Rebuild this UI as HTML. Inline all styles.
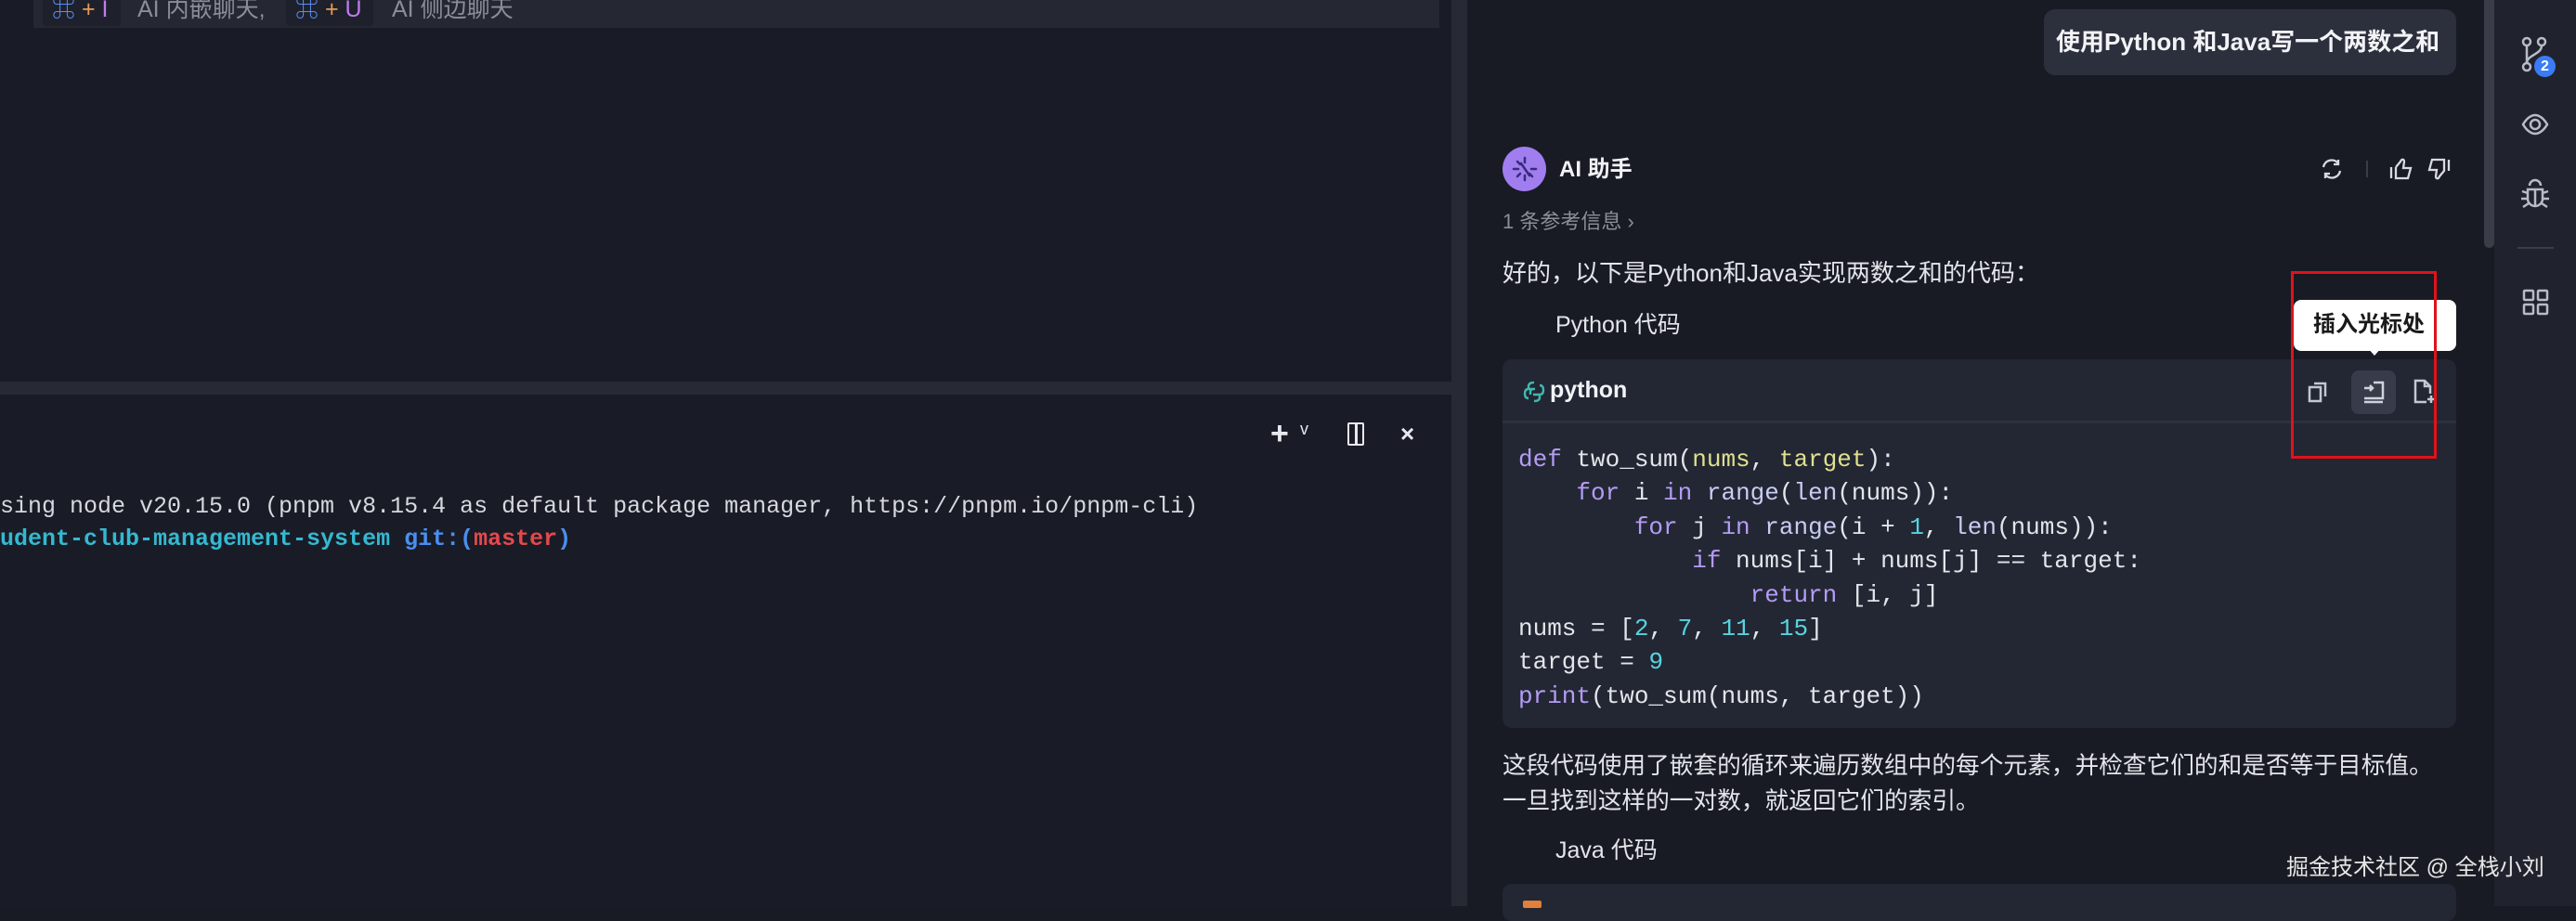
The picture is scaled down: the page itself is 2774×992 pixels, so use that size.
<!DOCTYPE html>
<html><head><meta charset="utf-8"><style>
*{margin:0;padding:0;box-sizing:border-box}
body{width:2774px;height:976px;background:#181b24;position:relative;overflow:hidden;font-family:"Liberation Sans","Noto Sans CJK SC",sans-serif;color:#e3e5ea}
.a{position:absolute;white-space:nowrap}
.mono{font-family:"Liberation Mono","DejaVu Sans Mono",monospace}
svg{position:absolute}
</style></head><body>
<!-- left editor -->
<div class="a" style="left:0;top:0;width:1563px;height:411px;background:#191c26;border-radius:0 0 10px 0"></div>
<div class="a" style="left:36px;top:0;width:1514px;height:30px;background:#252833"></div>
<div class="a" style="left:46px;top:0;width:84px;height:28px;background:#1e212b;border-radius:0 0 4px 4px"></div>
<div class="a" style="left:308px;top:0;width:94px;height:28px;background:#1e212b;border-radius:0 0 4px 4px"></div>
<div class="a" style="left:56px;top:-4px;font-size:25px;line-height:28px"><span style="color:#5a8cf5">⌘</span> <span style="color:#e59a5a">+</span> <span style="color:#c07af0">I</span></div>
<div class="a" style="left:148px;top:-4px;font-size:25px;line-height:28px;color:#8a8e99">AI 内嵌聊天,</div>
<div class="a" style="left:318px;top:-4px;font-size:25px;line-height:28px"><span style="color:#5a8cf5">⌘</span> <span style="color:#e59a5a">+</span> <span style="color:#c07af0">U</span></div>
<div class="a" style="left:422px;top:-4px;font-size:25px;line-height:28px;color:#8a8e99">AI 侧边聊天</div>
<div class="a" style="left:0;top:411px;width:1580px;height:14px;background:#272a35"></div>
<div class="a" style="left:1563px;top:0;width:17px;height:976px;background:#272a35"></div>
<!-- terminal -->
<div class="a" style="left:0;top:425px;width:1563px;height:551px;background:#191c26;border-radius:0 10px 0 0"></div>
<div class="a" style="left:1368px;top:448px;font-size:34px;font-weight:bold;color:#e8e8ee;line-height:38px">+</div>
<div class="a" style="left:1400px;top:452px;font-size:18px;color:#e8e8ee">v</div>
<div class="a" style="left:1451px;top:455px;width:18px;height:25px;border:2.5px solid #e8e8ee;border-radius:2px"></div>
<div class="a" style="left:1459px;top:455px;width:2.5px;height:25px;background:#e8e8ee"></div>
<div class="a" style="left:1508px;top:452px;font-size:26px;font-weight:bold;color:#e8e8ee">×</div>
<div class="a mono" style="left:0;top:528px;font-size:25px;color:#d6d8de;line-height:35px">sing node v20.15.0 (pnpm v8.15.4 as default package manager, https://pnpm.io/pnpm-cli)</div>
<div class="a mono" style="left:0;top:563px;font-size:25px;font-weight:bold;line-height:35px"><span style="color:#35b8d0">udent-club-management-system</span> <span style="color:#4a8ff0">git:(</span><span style="color:#e5484d">master</span><span style="color:#4a8ff0">)</span></div>
<!-- right chat -->
<div class="a" style="left:1580px;top:0;width:1106px;height:976px;background:#181b24"></div>
<div class="a" style="left:2675px;top:0;width:11px;height:267px;background:#3a3d48;border-radius:0 0 6px 6px"></div>
<div class="a" style="left:2686px;top:0;width:88px;height:976px;background:#20232d"></div>
<!-- sidebar icons -->
<svg style="left:2712px;top:38px" width="40" height="50" viewBox="0 0 40 50" fill="none" stroke="#b8bcc8" stroke-width="2.5"><circle cx="9" cy="7" r="4"/><circle cx="25" cy="7" r="4"/><circle cx="9" cy="34" r="4"/><path d="M9 11v19M25 11c0 10-16 10-16 19"/></svg>
<div class="a" style="left:2729px;top:60px;width:23px;height:23px;border-radius:50%;background:#3b7bf5;color:#fff;font-size:16px;font-weight:bold;text-align:center;line-height:23px">2</div>
<svg style="left:2714px;top:118px" width="32" height="32" viewBox="0 0 32 32" fill="none" stroke="#b8bcc8" stroke-width="2.5"><path d="M3 16c4-7 9-10 13-10s9 3 13 10c-4 7-9 10-13 10S7 23 3 16z"/><circle cx="16" cy="16" r="5"/></svg>
<svg style="left:2713px;top:192px" width="34" height="36" viewBox="0 0 34 36" fill="none" stroke="#b8bcc8" stroke-width="2.5"><path d="M11 8a6 6 0 0112 0"/><path d="M9 12h16v10a8 8 0 01-16 0z"/><path d="M17 12v18M3 14l6 2M31 14l-6 2M2 22h7M32 22h-7M4 31l6-4M30 31l-6-4"/></svg>
<div class="a" style="left:2711px;top:266px;width:39px;height:2px;background:#3a3e4a"></div>
<svg style="left:2716px;top:311px" width="29" height="29" viewBox="0 0 29 29" fill="none" stroke="#b8bcc8" stroke-width="2.5"><rect x="2" y="2" width="10" height="10" rx="1"/><rect x="17" y="2" width="10" height="10" rx="1"/><rect x="2" y="17" width="10" height="10" rx="1"/><rect x="17" y="17" width="10" height="10" rx="1"/></svg>
<!-- user bubble -->
<div class="a" style="left:2201px;top:10px;width:444px;height:71px;background:#2c303d;border-radius:12px"></div>
<div class="a" style="left:2214px;top:28px;font-size:26px;font-weight:bold;color:#f2f3f6;line-height:34px">使用Python 和Java写一个两数之和</div>
<!-- AI header -->
<div class="a" style="left:1618px;top:158px;width:47px;height:48px;border-radius:50%;background:#a07ef0"></div>
<svg style="left:1626px;top:166px" width="32" height="32" viewBox="0 0 32 32" fill="none" stroke="#3b2a78" stroke-width="2.5" stroke-linecap="round"><path d="M16 4v5M16 23v5M4 16h5M23 16h5M8 8l3 3M21 21l3 3M8 24l3-3M12 10l9 13"/></svg>
<div class="a" style="left:1679px;top:168px;font-size:24px;font-weight:bold;color:#f2f3f6;line-height:30px">AI 助手</div>
<svg style="left:2497px;top:168px" width="28" height="28" viewBox="0 0 28 28" fill="none" stroke="#d8dae0" stroke-width="2.3"><path d="M5 12a9 9 0 0116-4M23 16a9 9 0 01-16 4"/><path d="M21 4v5h-5M7 24v-5h5"/></svg>
<div class="a" style="left:2548px;top:173px;width:2px;height:18px;background:#3a3d48"></div>
<svg style="left:2572px;top:168px" width="28" height="28" viewBox="0 0 28 28" fill="none" stroke="#d8dae0" stroke-width="2.3"><path d="M3 12v12M8 12v12h13l3-11h-8l1-7c0-3-3-3-4 0l-5 6"/></svg>
<svg style="left:2612px;top:168px" width="28" height="28" viewBox="0 0 28 28" fill="none" stroke="#d8dae0" stroke-width="2.3"><path d="M25 4v12M20 4v12l-5 6c-1 3-4 3-4 0l1-7H4l3-11z"/></svg>
<div class="a" style="left:1618px;top:225px;font-size:22px;color:#8b8f9a;line-height:28px">1 条参考信息 ›</div>
<div class="a" style="left:1618px;top:278px;font-size:26px;color:#e3e5ea;line-height:32px">好的，以下是Python和Java实现两数之和的代码：</div>
<div class="a" style="left:1675px;top:334px;font-size:25px;color:#e3e5ea;line-height:32px">Python 代码</div>
<!-- code block -->
<div class="a" style="left:1618px;top:387px;width:1027px;height:397px;background:#232733;border-radius:10px"></div>
<div class="a" style="left:1618px;top:453px;width:1027px;height:3px;background:#2d313d"></div>
<svg style="left:1640px;top:409px" width="24" height="26" viewBox="0 0 24 26" fill="none" stroke="#3fb8b0" stroke-width="2.4"><path d="M12 3c-5 0-6 2-6 4v3h7M6 10c-3 0-4 2-4 5s1 5 4 5M18 16c3 0 4-2 4-5s-1-5-4-5M18 16v3c0 2-1 4-6 4M18 16h-7M11 10c-2 0-3 1-3 3v3"/></svg>
<div class="a" style="left:1669px;top:404px;font-size:25px;font-weight:bold;color:#f2f3f6;line-height:32px">python</div>
<svg style="left:2484px;top:408px" width="26" height="28" viewBox="0 0 26 28" fill="none" stroke="#c3c7d2" stroke-width="2.5"><rect x="3" y="9" width="12" height="15"/><path d="M8 5h12v14"/></svg>
<div class="a" style="left:2532px;top:399px;width:48px;height:47px;background:#383c4a;border-radius:8px"></div>
<svg style="left:2542px;top:408px" width="28" height="28" viewBox="0 0 28 28" fill="none" stroke="#d0d3dc" stroke-width="2.5"><path d="M4 10h9M10 7l3 3-3 3M14 4h10v17H4M4 25h20"/></svg>
<svg style="left:2597px;top:407px" width="28" height="30" viewBox="0 0 28 30" fill="none" stroke="#c3c7d2" stroke-width="2.5"><path d="M16 26H4V3h10l6 6v8M14 3v6h6M21 19v8M17 23h8"/></svg>
<div class="a mono" style="left:1635px;top:477px;font-size:26px;line-height:36.4px;color:#e3e5ea;white-space:pre"><span style="color:#b49cf5">def</span> two_sum(<span style="color:#dfe08e">nums</span>, <span style="color:#dfe08e">target</span>):
    <span style="color:#b49cf5">for</span> i <span style="color:#b49cf5">in</span> <span style="color:#c9ccf2">range</span>(<span style="color:#c9ccf2">len</span>(nums)):
        <span style="color:#b49cf5">for</span> j <span style="color:#b49cf5">in</span> <span style="color:#c9ccf2">range</span>(i + <span style="color:#56d4e0">1</span>, <span style="color:#c9ccf2">len</span>(nums)):
            <span style="color:#b49cf5">if</span> nums[i] + nums[j] == target:
                <span style="color:#b49cf5">return</span> [i, j]
nums = [<span style="color:#56d4e0">2</span>, <span style="color:#56d4e0">7</span>, <span style="color:#56d4e0">11</span>, <span style="color:#56d4e0">15</span>]
target = <span style="color:#56d4e0">9</span>
<span style="color:#b49cf5">print</span>(two_sum(nums, target))</div>
<!-- tooltip -->
<div class="a" style="left:2470px;top:323px;width:175px;height:55px;background:#fff;border-radius:8px"></div>
<div class="a" style="left:2549px;top:374px;width:0;height:0;border-left:8px solid transparent;border-right:8px solid transparent;border-top:9px solid #fff"></div>
<div class="a" style="left:2491px;top:333px;font-size:24px;font-weight:bold;color:#1a1a1a;line-height:34px">插入光标处</div>
<div class="a" style="left:2467px;top:292px;width:157px;height:202px;border:3px solid #e0121a"></div>
<!-- bottom text -->
<div class="a" style="left:1618px;top:806px;font-size:25.7px;color:#e3e5ea;line-height:38px">这段代码使用了嵌套的循环来遍历数组中的每个元素，并检查它们的和是否等于目标值。<br>一旦找到这样的一对数，就返回它们的索引。</div>
<div class="a" style="left:1675px;top:900px;font-size:25px;color:#e3e5ea;line-height:32px">Java 代码</div>
<div class="a" style="left:1618px;top:952px;width:1027px;height:40px;background:#232733;border-radius:10px"></div>
<div class="a" style="left:1640px;top:970px;width:20px;height:8px;background:#e0803a;border-radius:2px"></div>
<div class="a" style="left:2462px;top:919px;font-size:24px;color:#e6e6e6;line-height:32px">掘金技术社区 @ 全栈小刘</div>
</body></html>
